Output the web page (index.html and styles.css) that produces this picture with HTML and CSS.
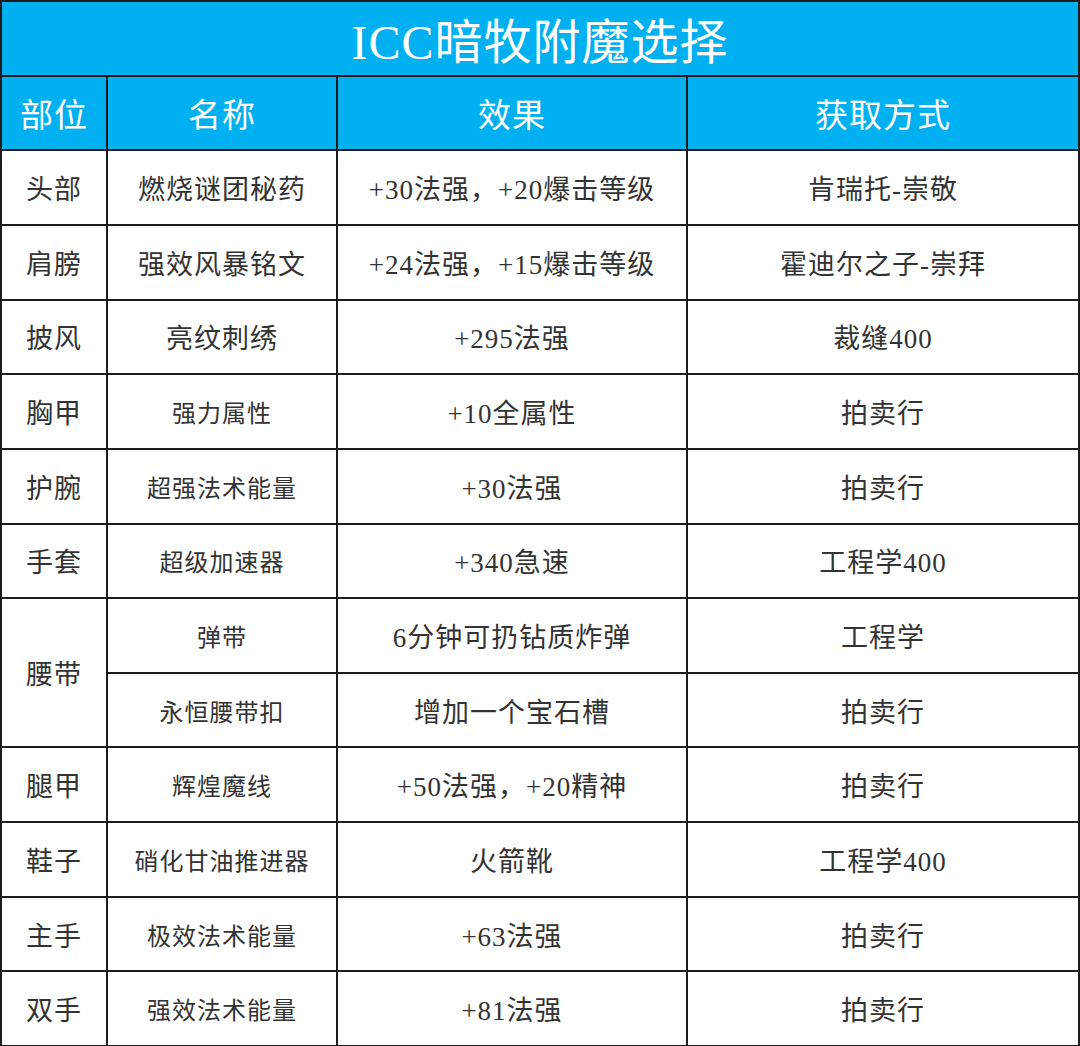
FILE: index.html
```html
<!DOCTYPE html>
<html lang="zh-CN">
<head>
<meta charset="utf-8">
<title>ICC暗牧附魔选择</title>
<link rel="stylesheet" href="styles.css">
</head>
<body>
<div class="sheet">
  <div class="cell title">ICC暗牧附魔选择</div>

  <div class="cell head">部位</div>
  <div class="cell head">名称</div>
  <div class="cell head">效果</div>
  <div class="cell head">获取方式</div>

  <div class="cell">头部</div>
  <div class="cell">燃烧谜团秘药</div>
  <div class="cell">+30法强，+20爆击等级</div>
  <div class="cell">肯瑞托-崇敬</div>

  <div class="cell">肩膀</div>
  <div class="cell">强效风暴铭文</div>
  <div class="cell">+24法强，+15爆击等级</div>
  <div class="cell">霍迪尔之子-崇拜</div>

  <div class="cell">披风</div>
  <div class="cell">亮纹刺绣</div>
  <div class="cell">+295法强</div>
  <div class="cell">裁缝400</div>

  <div class="cell">胸甲</div>
  <div class="cell small">强力属性</div>
  <div class="cell">+10全属性</div>
  <div class="cell">拍卖行</div>

  <div class="cell">护腕</div>
  <div class="cell small">超强法术能量</div>
  <div class="cell">+30法强</div>
  <div class="cell">拍卖行</div>

  <div class="cell">手套</div>
  <div class="cell small">超级加速器</div>
  <div class="cell">+340急速</div>
  <div class="cell">工程学400</div>

  <div class="cell span2">腰带</div>
  <div class="cell small">弹带</div>
  <div class="cell">6分钟可扔钻质炸弹</div>
  <div class="cell">工程学</div>

  <div class="cell small">永恒腰带扣</div>
  <div class="cell">增加一个宝石槽</div>
  <div class="cell">拍卖行</div>

  <div class="cell">腿甲</div>
  <div class="cell small">辉煌魔线</div>
  <div class="cell">+50法强，+20精神</div>
  <div class="cell">拍卖行</div>

  <div class="cell">鞋子</div>
  <div class="cell small">硝化甘油推进器</div>
  <div class="cell">火箭靴</div>
  <div class="cell">工程学400</div>

  <div class="cell">主手</div>
  <div class="cell small">极效法术能量</div>
  <div class="cell">+63法强</div>
  <div class="cell">拍卖行</div>

  <div class="cell">双手</div>
  <div class="cell small">强效法术能量</div>
  <div class="cell">+81法强</div>
  <div class="cell">拍卖行</div>
</div>
</body>
</html>
```

FILE: styles.css
```css
html, body {
  margin: 0;
  padding: 0;
  background: #ffffff;
}

.sheet {
  box-sizing: border-box;
  width: 1080px;
  height: 1046px;
  padding: 2px 2px 1px 2px;
  display: grid;
  grid-template-columns: 104px 228px 348px 390px;
  grid-template-rows: repeat(14, 1fr);
  gap: 2px;
  background: #1c1c1c;
  font-family: "Liberation Serif", "Noto Sans CJK SC", serif;
  color: #333333;
}

.cell {
  background: #ffffff;
  display: flex;
  align-items: center;
  justify-content: center;
  font-size: 27px;
  letter-spacing: 1px;
  white-space: nowrap;
}

.cell.small {
  font-size: 24px;
}

.cell.title {
  grid-column: 1 / 5;
  background: #00b0f0;
  color: #ffffff;
  font-size: 48px;
  letter-spacing: 1px;
}

.cell.head {
  background: #00b0f0;
  color: #ffffff;
  font-size: 33px;
  letter-spacing: 1px;
}

.cell.span2 {
  grid-row: span 2;
}
```
